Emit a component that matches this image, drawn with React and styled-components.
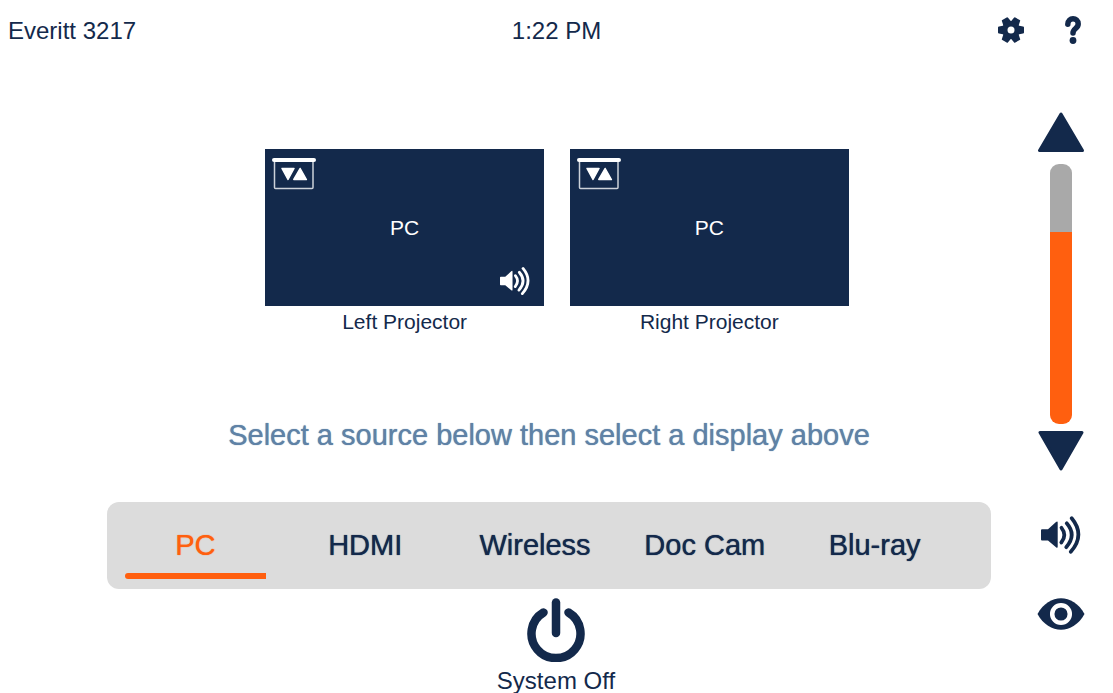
import { useState } from 'react';
import styled, { createGlobalStyle } from 'styled-components';

const navy = '#13294b';
const orange = '#ff5f0f';

const sources = ['PC', 'HDMI', 'Wireless', 'Doc Cam', 'Blu-ray'];

const SpeakerIcon = (props) => (
  <svg viewBox='0 0 40 38' aria-hidden='true' {...props}>
    <path
      d='M1 13.3h6L15 6q1.700-1.300 1.700.6v24q0 2-1.700.7L7 24.500H1q-1 0-1-1v-9.200q0-1 1-1z'
      fill='currentColor'
    />
    <g fill='none' stroke='currentColor' strokeWidth='3.700' strokeLinecap='round'>
      <path d='M20.500 11.800Q26.300 19 20.300 26.500' />
      <path d='M25.700 7.300Q36 19 25.200 31.200' />
      <path d='M30.700 2.300Q44.500 19 29.800 35.800' />
    </g>
  </svg>
);

const ScreenIcon = () => (
  <svg width='44' height='32' viewBox='0 0 44 32' aria-hidden='true'>
    <rect x='2.500' y='3' width='38.500' height='27.500' rx='1' fill='none' stroke='#ccd1d9' strokeWidth='1.500' />
    <rect x='0' y='0' width='44' height='4' rx='2' fill='#fff' />
    <path
      d='M10 10.500h12l-6 11zM28.200 10.500l6.200 11H21.800z'
      fill='#fff'
      stroke='#fff'
      strokeWidth='1.500'
      strokeLinejoin='round'
    />
  </svg>
);

const GearIcon = () => (
  <svg width='26' height='26' viewBox='0 0 26 26' aria-hidden='true'>
    <g fill={navy}>
      {[0, 60, 120].map((angle) => (
        <path
          key={angle}
          d='M1 9.500L6 8.500h14l5 1q1 0 1 1v5q0 1-1 1l-5 1H6l-5-1q-1 0-1-1v-5q0-1 1-1z'
          transform={`rotate(${angle} 13 13)`}
        />
      ))}
      <circle cx='13' cy='13' r='9' />
    </g>
    <circle cx='13' cy='13' r='3.500' fill='#fff' />
  </svg>
);

const HelpIcon = () => (
  <svg width='16' height='28' viewBox='0 0 16 28' aria-hidden='true'>
    <path
      d='M2.800 8.300C2.800 1 13.200 1 13.200 8C13.200 12.500 8 12.500 8 17'
      fill='none'
      stroke={navy}
      strokeWidth='5.500'
      strokeLinecap='round'
    />
    <circle cx='8' cy='24.500' r='3.400' fill={navy} />
  </svg>
);

const ArrowIcon = ({ down }) => (
  <svg width='48' height='40' viewBox='0 0 48 40' aria-hidden='true'>
    <path
      d={down ? 'M3 1.500h42L24 38z' : 'M2.500 38.500h43L24 2z'}
      fill={navy}
      stroke={navy}
      strokeWidth='3'
      strokeLinejoin='round'
    />
  </svg>
);

const EyeIcon = () => (
  <svg width='48' height='32' viewBox='0 0 48 32' aria-hidden='true'>
    <path d='M.5 16C12-5 36-5 47.500 16C36 37 12 37 .5 16z' fill={navy} />
    <circle cx='24' cy='16' r='8.800' fill={navy} stroke='#fff' strokeWidth='4.500' />
  </svg>
);

const PowerIcon = () => (
  <svg width='58' height='64' viewBox='0 0 58 64' aria-hidden='true'>
    <g fill='none' stroke={navy} strokeWidth='8.500' strokeLinecap='round'>
      <path d='M16.500 14.500A24.500 24.500 0 1 0 41.500 14.500' />
      <path d='M29 4.500V35' />
    </g>
  </svg>
);

const App = () => {
  const [source, setSource] = useState('PC');
  const [level, setLevel] = useState(74);

  return (
    <Page>
      <GlobalStyle />
      <Header>
        <Room>Everitt 3217</Room>
        <time>1:22 PM</time>
        <HeaderActions>
          <IconButton aria-label='Settings'>
            <GearIcon />
          </IconButton>
          <IconButton aria-label='Help'>
            <HelpIcon />
          </IconButton>
        </HeaderActions>
      </Header>

      <Body>
        <Main>
          <Displays>
            <Display>
              <Screen>
                <ScreenIcon />
                <ScreenSource>PC</ScreenSource>
                <ScreenAudio />
              </Screen>
              <DisplayName>Left Projector</DisplayName>
            </Display>
            <Display>
              <Screen>
                <ScreenIcon />
                <ScreenSource>PC</ScreenSource>
              </Screen>
              <DisplayName>Right Projector</DisplayName>
            </Display>
          </Displays>

          <Hint>Select a source below then select a display above</Hint>

          <Sources>
            {sources.map((name) => (
              <SourceButton
                key={name}
                $active={name === source}
                aria-pressed={name === source}
                onClick={() => setSource(name)}
              >
                <span>{name}</span>
              </SourceButton>
            ))}
          </Sources>

          <PowerButton>
            <PowerIcon />
            System Off
          </PowerButton>
        </Main>

        <Side>
          <IconButton aria-label='Volume up' onClick={() => setLevel(Math.min(100, level + 5))}>
            <ArrowIcon />
          </IconButton>
          <Volume
            type='range'
            aria-label='Volume'
            min='0'
            max='100'
            value={level}
            style={{ '--level': `${level}%` }}
            onChange={(e) => setLevel(Number(e.target.value))}
          />
          <IconButton aria-label='Volume down' onClick={() => setLevel(Math.max(0, level - 5))}>
            <ArrowIcon down />
          </IconButton>
          <MuteButton aria-label='Mute'>
            <SpeakerIcon width='40' height='38' />
          </MuteButton>
          <IconButton aria-label='Preview'>
            <EyeIcon />
          </IconButton>
        </Side>
      </Body>
    </Page>
  );
};

const GlobalStyle = createGlobalStyle`
  * {
    box-sizing: border-box;
  }

  body {
    margin: 0;
    background-color: white;
    color: ${navy};
    font-family: 'Liberation Sans', Arial, sans-serif;
    font-size: 24px;
    line-height: 28px;
  }

  button {
    padding: 0;
    border: none;
    background: none;
    color: inherit;
    font: inherit;
    cursor: pointer;
  }
`;

const Page = styled.div`
  overflow: hidden;
`;

const Header = styled.header`
  display: grid;
  grid-template-columns: 1fr auto 1fr;
  align-items: center;
  padding: 16px 8px 0;
  height: 46px;
`;

const Room = styled.div`
  white-space: nowrap;
`;

const HeaderActions = styled.div`
  display: flex;
  justify-content: flex-end;
  align-items: center;
  gap: 41px;
  padding: 0 24px 2px 0;
`;

const IconButton = styled.button`
  display: flex;
`;

const Body = styled.div`
  display: flex;
  align-items: flex-start;
  padding: 66px 28px 0 107px;
`;

const Main = styled.main`
  flex: 1;
  display: flex;
  flex-direction: column;
  align-items: center;
  padding-top: 37px;
`;

const Displays = styled.div`
  display: grid;
  grid-template-columns: 1fr 1fr;
  gap: 26px;
  width: 66%;
  margin-left: 16px;
`;

const Display = styled.div`
  text-align: center;
  font-size: 21px;
  line-height: 24px;
`;

const Screen = styled.button`
  position: relative;
  display: block;
  width: 100%;
  height: 157px;
  background-color: ${navy};
  color: white;

  > svg:first-child {
    position: absolute;
    top: 9px;
    left: 7px;
  }
`;

const ScreenSource = styled.span`
  font-size: 21px;
`;

const ScreenAudio = styled(SpeakerIcon)`
  position: absolute;
  right: 14px;
  bottom: 10px;
  width: 30px;
  height: 30px;
`;

const DisplayName = styled.div`
  margin-top: 4px;
`;

const Hint = styled.p`
  margin: 84px 0 0;
  color: #5f82a6;
  font-size: 29px;
  line-height: 34px;
  text-shadow: 0 0 1px currentColor;
`;

const Sources = styled.nav`
  display: grid;
  grid-template-columns: repeat(5, 1fr);
  column-gap: 29px;
  width: 100%;
  height: 87px;
  margin-top: 50px;
  padding: 10px 46px 10px 18px;
  border-radius: 12px;
  background-color: #dcdcdc;
`;

const SourceButton = styled.button`
  display: flex;
  flex-direction: column;
  justify-content: space-between;
  align-items: center;
  color: ${({ $active }) => ($active ? orange : navy)};
  white-space: nowrap;

  span {
    padding-top: 16px;
    font-size: 29px;
    line-height: 34px;
    text-shadow: 0 0 1px currentColor;
  }

  &::after {
    content: '';
    width: 100%;
    height: 6px;
    border-radius: 3px 0 0 3px;
    background-color: ${({ $active }) => ($active ? orange : 'transparent')};
  }
`;

const PowerButton = styled.button`
  display: flex;
  flex-direction: column;
  align-items: center;
  gap: 5px;
  margin-top: 9px;
  padding-left: 14px;
`;

const Side = styled.aside`
  display: flex;
  flex-direction: column;
  align-items: center;
  width: 48px;
  margin-left: 46px;
`;

const Volume = styled.input`
  appearance: none;
  writing-mode: vertical-lr;
  direction: rtl;
  width: 22px;
  height: 260px;
  margin: 12px 0 7px;
  border-radius: 9px;
  background: linear-gradient(to top, ${orange} var(--level), #a9a9a9 var(--level));
  cursor: pointer;

  &::-webkit-slider-thumb {
    appearance: none;
    width: 22px;
    height: 1px;
    background: transparent;
  }
`;

const MuteButton = styled(IconButton)`
  margin: 45px 0 44px;
`;

export default App;
